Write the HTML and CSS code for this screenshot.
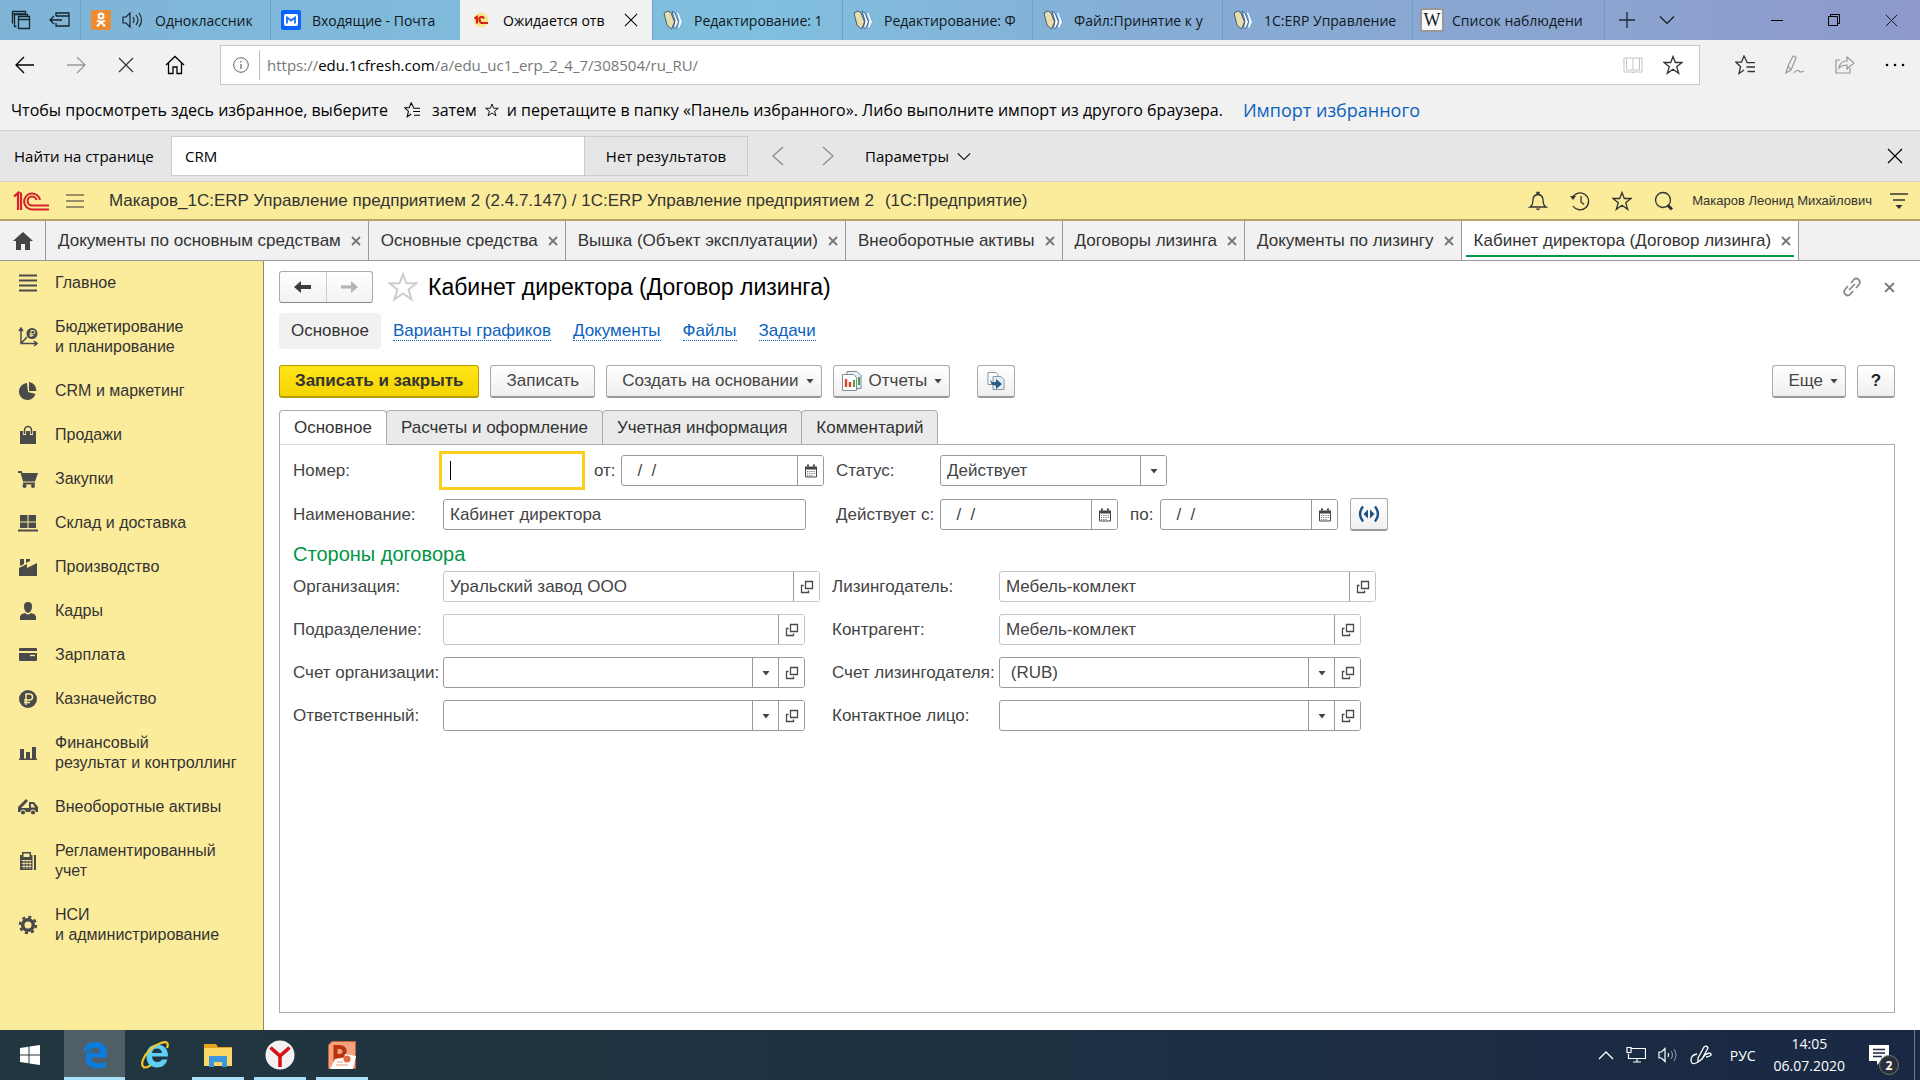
FILE: index.html
```html
<!DOCTYPE html>
<html lang="ru">
<head>
<meta charset="utf-8">
<title>Кабинет директора (Договор лизинга)</title>
<link rel="stylesheet" href="styles.css">
</head>
<body>
<svg class="defs" aria-hidden="true">
  <symbol id="i-open" viewBox="0 0 14 14"><path d="M5.5 1.5h7v7h-7zM3.5 5.5h-2v7h7v-2" fill="none" stroke="#4a4a4a" stroke-width="1.3"/></symbol>
  <symbol id="i-cal" viewBox="0 0 14 14"><path d="M1 2.5h12v10a1 1 0 0 1-1 1H2a1 1 0 0 1-1-1z" fill="#444"/><path d="M3 .5h2v2H3zM9 .5h2v2H9z" fill="#444"/><path d="M2 5.5h10v7H2z" fill="#fff"/><path d="M3 7.5h8M3 9.5h8M3 11.5h6" stroke="#777" stroke-dasharray="1.2 1" fill="none"/></symbol>
  <symbol id="i-arrow" viewBox="0 0 8 8"><path d="M.5 2h7L4 6.500z" fill="#444"/></symbol>
  <symbol id="i-x" viewBox="0 0 16 16"><path d="M1 1l14 14M15 1L1 15" fill="none" stroke="currentColor" stroke-width="1.2"/></symbol>
  <symbol id="i-xs" viewBox="0 0 10 10"><path d="M1 1l8 8M9 1L1 9" fill="none" stroke="#777" stroke-width="1.8"/></symbol>
  <symbol id="i-star" viewBox="0 0 20 20"><path d="M10 1.500l2.300 6H19l-5.300 4.200 2 6.600L10 14.300l-5.700 4 2-6.600L1 7.500h6.700z" fill="none" stroke="currentColor" stroke-width="1.300"/></symbol>
  <symbol id="i-fav" viewBox="0 0 20 20"><path d="M12 7L9 1 6.500 7.200H1l4.500 4.300-1.500 7 5-3.500M11.500 7.700H20M11.500 12H20M12.500 16.500H20" fill="none" stroke="currentColor" stroke-width="1.300"/></symbol>
  <symbol id="i-down" viewBox="0 0 16 10"><path d="M1 1.500l7 7 7-7" fill="none" stroke="currentColor" stroke-width="1.200"/></symbol>
  <symbol id="i-docs" viewBox="0 0 20 20"><path d="M13 1l3 2 3.500 9-3 6.500-2-1L16 11z" fill="#f4f8fc" stroke="#5c9ad6" stroke-width=".7"/><path d="M9 1l3 2 3.500 9-3 6.500-2-1L12 11z" fill="#fff" stroke="#2f5c8c" stroke-width=".9"/><path d="M1 3l4-2 3 2 3.500 9L8.500 19 4 15z" fill="#e9dfae" stroke="#2c4258" stroke-width=".8"/></symbol>
</svg>
<div class="screen">
  <header class="tabstrip">
    <div class="strip-tools">
      <svg width="20" height="20" viewBox="0 0 20 20"><path d="M1.500 13.500v-12h13v3M1.500 4h13M5.500 16.500h-2v-12h13v2M7.500 6.500h11v12h-11zM7.500 9.500h11" fill="none" stroke="#15252e" stroke-width="1.300"/></svg>
      <svg width="22" height="18" viewBox="0 0 22 18"><path d="M7 5V2h13v13H7v-3M7 5h13M1 9h12M5 5L1 9l4 4" fill="none" stroke="#15252e" stroke-width="1.300"/></svg>
    </div>
    <div class="btab">
      <svg width="20" height="20" viewBox="0 0 20 20"><rect width="20" height="20" rx="2" fill="#ee8a2f"/><circle cx="10" cy="6" r="2.500" fill="none" stroke="#fff" stroke-width="2"/><path d="M6 10.500q4 2.500 8 0M10 12l-4 4.500M10 12l4 4.500" fill="none" stroke="#fff" stroke-width="2"/></svg>
      <svg width="22" height="18" viewBox="0 0 22 18"><path d="M1 6h3l4-4v14l-4-4H1zM11 6q2 3 0 6M14 4q4 5 0 10M17 2q5 7 0 14" fill="none" stroke="#223" stroke-width="1.200"/></svg>
      <span class="btab-text">Одноклассник</span>
    </div>
    <div class="btab">
      <svg width="20" height="20" viewBox="0 0 20 20"><rect width="20" height="20" rx="2" fill="#0a62ff"/><rect x="3" y="4" width="14" height="12" rx="2" fill="#fff"/><path d="M6 13.500V7.500l4 3 4-3v6" fill="none" stroke="#1a6dff" stroke-width="1.800"/></svg>
      <span class="btab-text">Входящие - Почта</span>
    </div>
    <div class="btab active">
      <svg width="20" height="20" viewBox="0 0 20 20"><circle cx="9" cy="10" r="7.500" fill="#fbe58a"/><path d="M2.500 8.500L5 7v6.500" fill="none" stroke="#d8201c" stroke-width="2.200"/><path d="M12 8.500q-1-2-3-1.500T7.500 10t2 3H16" fill="none" stroke="#d8201c" stroke-width="2.200"/></svg>
      <span class="btab-text">Ожидается отв</span>
      <svg class="tab-x" width="14" height="14"><use href="#i-x"/></svg>
    </div>
    <div class="btab"><svg width="20" height="20"><use href="#i-docs"/></svg><span class="btab-text">Редактирование: 1</span></div>
    <div class="btab"><svg width="20" height="20"><use href="#i-docs"/></svg><span class="btab-text">Редактирование: Ф</span></div>
    <div class="btab"><svg width="20" height="20"><use href="#i-docs"/></svg><span class="btab-text">Файл:Принятие к у</span></div>
    <div class="btab"><svg width="20" height="20"><use href="#i-docs"/></svg><span class="btab-text">1С:ERP Управление</span></div>
    <div class="btab wide"><span class="wiki">W</span><span class="btab-text">Список наблюдени</span></div>
    <div class="strip-new">
      <svg width="16" height="16" viewBox="0 0 16 16"><path d="M8 0v16M0 8h16" stroke="#1b2836" stroke-width="1.300"/></svg>
      <svg width="16" height="10"><use href="#i-down"/></svg>
    </div>
    <div class="winctl">
      <svg width="12" height="12" viewBox="0 0 12 12"><path d="M0 6.500h12" stroke="#000"/></svg>
      <svg width="12" height="12" viewBox="0 0 12 12"><path d="M.5 2.500h9v9h-9zM2.500 2.500v-2h9v9h-2" fill="none" stroke="#000"/></svg>
      <svg width="13" height="13"><use href="#i-x"/></svg>
    </div>
  </header>

  <div class="addrbar">
    <div class="nav-icons">
      <svg width="20" height="18" viewBox="0 0 20 18"><path d="M19 9H1M9 1L1 9l8 8" fill="none" stroke="#000" stroke-width="1.300"/></svg>
      <svg width="20" height="18" viewBox="0 0 20 18"><path d="M1 9h18M11 1l8 8-8 8" fill="none" stroke="#999" stroke-width="1.300"/></svg>
      <svg width="16" height="16"><use href="#i-x"/></svg>
      <svg width="20" height="20" viewBox="0 0 20 20"><path d="M1 10l9-8.500 9 8.500M3.500 8v10.500h4.500V12h4v6.500h4.500V8" fill="none" stroke="#000" stroke-width="1.300"/></svg>
    </div>
    <div class="address">
      <svg width="16" height="16" viewBox="0 0 16 16"><circle cx="8" cy="8" r="7.300" fill="none" stroke="#666"/><path d="M8 7v5M8 4v1.500" stroke="#666" stroke-width="1.200"/></svg>
      <div class="url"><span>https://</span><b>edu.1cfresh.com</b><span>/a/edu_uc1_erp_2_4_7/308504/ru_RU/</span></div>
      <svg width="20" height="18" viewBox="0 0 20 18"><path d="M1 2h8l1 1 1-1h8v14h-8l-1 1-1-1H1zM10 3v13M3.500 2v12H9M16.500 2v12H11" fill="none" stroke="#c4c4c4"/></svg>
      <svg width="20" height="20"><use href="#i-star"/></svg>
    </div>
    <div class="addr-tools">
      <svg width="20" height="20"><use href="#i-fav"/></svg>
      <svg width="20" height="20" viewBox="0 0 20 20"><path d="M1 18L3 11 8 1q3 0 3 2L6 15zM3 11l3 4M9 18q3-4 5-2t5 0" fill="none" stroke="#999" stroke-width="1.200"/></svg>
      <svg width="20" height="20" viewBox="0 0 20 20"><path d="M5 5H1v13h14v-5M4 13q1-7 8-7V2l7 6-7 6v-4q-5 0-8 3z" fill="none" stroke="#999" stroke-width="1.200"/></svg>
      <svg width="20" height="4" viewBox="0 0 20 4"><circle cx="2" cy="2" r="1.300"/><circle cx="10" cy="2" r="1.300"/><circle cx="18" cy="2" r="1.300"/></svg>
    </div>
  </div>

  <div class="favbar">
    <span>Чтобы просмотреть здесь избранное, выберите</span>
    <svg class="fav-ico" width="16" height="16"><use href="#i-fav"/></svg>
    <span>затем</span>
    <svg width="14" height="14"><use href="#i-star"/></svg>
    <span>и перетащите в папку «Панель избранного». Либо выполните импорт из другого браузера.</span>
    <a href="#">Импорт избранного</a>
  </div>

  <div class="findbar">
    <label for="find">Найти на странице</label>
    <input id="find" type="text" value="CRM">
    <div class="find-result">Нет результатов</div>
    <div class="find-nav">
      <svg width="12" height="20" viewBox="0 0 12 20"><path d="M11 1L1 10l10 9" fill="none" stroke="#888" stroke-width="1.200"/></svg>
      <svg width="12" height="20" viewBox="0 0 12 20"><path d="M1 1l10 9-10 9" fill="none" stroke="#888" stroke-width="1.200"/></svg>
    </div>
    <button class="find-params" type="button">Параметры <svg width="14" height="9"><use href="#i-down"/></svg></button>
    <svg class="find-x" width="16" height="16"><use href="#i-x"/></svg>
  </div>

  <div class="apphead">
    <svg class="logo" width="36" height="20" viewBox="0 0 36 20"><g fill="none" stroke="#d8232a"><path d="M1 5.500L5 2v17M8 19V1.500" stroke-width="2.200"/><path d="M1 5.200L7 1.200" stroke-width="1.500"/><path d="M27 9a8 8 0 1 0-8 9.500h17" stroke-width="2"/><path d="M23.500 9a4.500 4.500 0 1 0-4.500 5.500h17" stroke-width="2"/></g></svg>
    <svg class="burger" width="18" height="14" viewBox="0 0 18 14"><path d="M0 1h18M0 7h18M0 13h18" stroke="#333" stroke-width="1.200"/></svg>
    <div class="apptitle"><span>Макаров_1С:ERP Управление предприятием 2 (2.4.7.147) / 1С:ERP Управление предприятием 2</span><span>(1С:Предприятие)</span></div>
    <div class="head-icons">
      <svg width="20" height="20" viewBox="0 0 20 20"><path d="M2 16q3-2 3-7 0-5 5-5.500Q15 4 15 9q0 5 3 7zM9 3.500V1.500h2v2" fill="none" stroke="#333" stroke-width="1.300"/><path d="M7.500 17.500h5l-2.500 2z" fill="#333"/></svg>
      <svg width="20" height="20" viewBox="0 0 20 20"><path d="M2.500 6.500A8.500 8.500 0 1 1 3 15M11 5v6l3 2.500" fill="none" stroke="#333" stroke-width="1.300"/><path d="M0 5h6l-3 4z" fill="#333"/></svg>
      <svg width="20" height="20"><use href="#i-star"/></svg>
      <svg width="20" height="20" viewBox="0 0 20 20"><circle cx="9" cy="9" r="7.500" fill="none" stroke="#333" stroke-width="1.300"/><path d="M13.500 14l4.500 4.500" stroke="#333" stroke-width="3"/></svg>
    </div>
    <span class="user">Макаров Леонид Михайлович</span>
    <svg width="18" height="18" viewBox="0 0 18 18"><path d="M0 2h18M3 8h12" stroke="#333" stroke-width="1.300"/><path d="M5.500 13h7L9 17z" fill="#333"/></svg>
  </div>

  <nav class="apptabs">
    <a class="home" href="#" aria-label="Начальная страница"><svg width="20" height="18" viewBox="0 0 20 18"><path d="M10 0L0 9h3v9h5v-6h4v6h5V9h3z" fill="#444"/></svg></a>
    <a class="atab" href="#">Документы по основным средствам<svg width="10" height="10"><use href="#i-xs"/></svg></a>
    <a class="atab" href="#">Основные средства<svg width="10" height="10"><use href="#i-xs"/></svg></a>
    <a class="atab" href="#">Вышка (Объект эксплуатации)<svg width="10" height="10"><use href="#i-xs"/></svg></a>
    <a class="atab" href="#">Внеоборотные активы<svg width="10" height="10"><use href="#i-xs"/></svg></a>
    <a class="atab" href="#">Договоры лизинга<svg width="10" height="10"><use href="#i-xs"/></svg></a>
    <a class="atab" href="#">Документы по лизингу<svg width="10" height="10"><use href="#i-xs"/></svg></a>
    <a class="atab current" href="#">Кабинет директора (Договор лизинга)<svg width="10" height="10"><use href="#i-xs"/></svg></a>
  </nav>

  <div class="body">
    <nav class="side">
      <a href="#"><svg width="20" height="20" viewBox="0 0 20 20"><path d="M1 2.500h18M1 7.500h18M1 12.500h18M1 17.500h18" stroke="#4a4a4a" stroke-width="2.200"/></svg><span>Главное</span></a>
      <a href="#"><svg width="20" height="20" viewBox="0 0 20 20"><g fill="none" stroke="#4a4a4a" stroke-width="1.500"><path d="M3 2v14.500h15M3 16.500L9 10M1 4l2-3 2 3M16 14l3 2.500-3 2.500"/></g><circle cx="14" cy="6.500" r="5.500" fill="#4a4a4a"/><path d="M13 10V3.500h2q2 0 2 1.700T15 7h-3.500M11.500 8.700h4" fill="none" stroke="#fbec9c"/></svg><span>Бюджетирование<br>и планирование</span></a>
      <a href="#"><svg width="20" height="20" viewBox="0 0 20 20"><path d="M9 2a8.500 8.500 0 1 0 8.500 11L10 11z" fill="#4a4a4a"/><path d="M11 1q7 1 7.500 9H11z" fill="#4a4a4a"/></svg><span>CRM и маркетинг</span></a>
      <a href="#"><svg width="20" height="20" viewBox="0 0 20 20"><path d="M2 6h16v13H2z" fill="#4a4a4a"/><path d="M6.500 10V5a3.500 3.500 0 0 1 7 0v5" fill="none" stroke="#fbec9c" stroke-width="3.200"/><path d="M6.500 9V5a3.500 3.500 0 0 1 7 0v4" fill="none" stroke="#4a4a4a" stroke-width="1.600"/></svg><span>Продажи</span></a>
      <a href="#"><svg width="20" height="20" viewBox="0 0 20 20"><path d="M0 2h3.500l1 2H20l-3 8.500H5L2.500 4H0zM5 13.500h12v2H5z" fill="#4a4a4a"/><circle cx="6.500" cy="17" r="2" fill="#4a4a4a"/><circle cx="15" cy="17" r="2" fill="#4a4a4a"/></svg><span>Закупки</span></a>
      <a href="#"><svg width="20" height="20" viewBox="0 0 20 20"><path d="M2 2h7.500v6.500H2zM10.500 2H18v6.500h-7.500zM2 9.500h7.500V15H2zM10.500 9.500H18V15h-7.500zM0 16.500h20v2H0z" fill="#4a4a4a"/></svg><span>Склад и доставка</span></a>
      <a href="#"><svg width="20" height="20" viewBox="0 0 20 20"><path d="M1 19v-8l8-4v4l10-5v13z" fill="#4a4a4a"/><path d="M2 2h4v5L2 9zM8 2h4v2L8 6z" fill="#4a4a4a"/></svg><span>Производство</span></a>
      <a href="#"><svg width="20" height="20" viewBox="0 0 20 20"><path d="M6 5q0-4 4-4t4 4q0 6-4 7-4-1-4-7zM2 19v-3q0-3 5-4 3 3 6 0 5 1 5 4v3z" fill="#4a4a4a"/></svg><span>Кадры</span></a>
      <a href="#"><svg width="20" height="20" viewBox="0 0 20 20"><path d="M1 4q0-1 1-1h16q1 0 1 1v2H1zM1 8h18v7q0 1-1 1H2q-1 0-1-1z" fill="#4a4a4a"/><path d="M12 10.500h5" stroke="#fbec9c" stroke-width="1.300"/></svg><span>Зарплата</span></a>
      <a href="#"><svg width="20" height="20" viewBox="0 0 20 20"><circle cx="10" cy="10" r="9" fill="#4a4a4a"/><path d="M8 16V5h3.500q3 0 3 3t-3 3H6M6 13.500h6" fill="none" stroke="#fbec9c" stroke-width="1.500"/></svg><span>Казначейство</span></a>
      <a href="#"><svg width="20" height="20" viewBox="0 0 20 20"><path d="M2 6h4v10H2zM8 9h4v7H8zM14 4h4v12h-4zM1 15.500h18V17H1z" fill="#4a4a4a"/></svg><span>Финансовый<br>результат и контроллинг</span></a>
      <a href="#"><svg width="20" height="20" viewBox="0 0 20 20"><path d="M0 10L8 2l2 2-7 7h8V5h5l4 5v5H0zM13 7v3.500h4L15 7z" fill="#4a4a4a" fill-rule="evenodd"/><circle cx="5" cy="15.500" r="2.500" fill="#4a4a4a" stroke="#fbec9c"/><circle cx="15" cy="15.500" r="2.500" fill="#4a4a4a" stroke="#fbec9c"/></svg><span>Внеоборотные активы</span></a>
      <a href="#"><svg width="20" height="20" viewBox="0 0 20 20"><path d="M4 1h9v3h1.500v15H2V4h2zM16 4h2v15h-2z" fill="#4a4a4a"/><path d="M5.500 2.500h6V6h-6z" fill="#fbec9c"/><path d="M3.500 9.500h10M3.500 12.500h10M3.500 15.500h10M6 9v9M9 9v9M12 9v9" stroke="#fbec9c" stroke-width=".8"/></svg><span>Регламентированный<br>учет</span></a>
      <a href="#"><svg width="20" height="20" viewBox="0 0 20 20"><circle cx="10" cy="10" r="5.300" fill="none" stroke="#4a4a4a" stroke-width="3.500"/><circle cx="10" cy="10" r="8" fill="none" stroke="#4a4a4a" stroke-width="2.400" stroke-dasharray="3.140 3.140"/></svg><span>НСИ<br>и администрирование</span></a>
    </nav>

    <main class="main">
      <div class="titlerow">
        <div class="backfwd">
          <button type="button" aria-label="Назад"><svg width="18" height="14" viewBox="0 0 18 14"><path d="M0 7l7-6v4h10v4H7v4z" fill="#3c3c3c"/></svg></button>
          <button type="button" aria-label="Вперед"><svg width="18" height="14" viewBox="0 0 18 14"><path d="M18 7l-7-6v4.500H1v3h10V13z" fill="#b4b4b4"/></svg></button>
        </div>
        <svg class="bigstar" width="30" height="30"><use href="#i-star"/></svg>
        <h1>Кабинет директора (Договор лизинга)</h1>
        <svg class="link" width="20" height="20" viewBox="0 0 20 20"><path d="M9 6l3-3.500q2-2 4.500 0t.5 5L14 11M11 14l-3 3.500q-2 2-4.500 0t-.5-5L6 9M7 13l6-6" fill="none" stroke="#888" stroke-width="1.700"/></svg>
        <svg width="11" height="11"><use href="#i-xs"/></svg>
      </div>

      <nav class="subnav">
        <span class="here">Основное</span>
        <a href="#">Варианты графиков</a><a href="#">Документы</a><a href="#">Файлы</a><a href="#">Задачи</a>
      </nav>

      <div class="cmdbar">
        <button class="btn primary" type="button">Записать и закрыть</button>
        <button class="btn" type="button">Записать</button>
        <button class="btn menu" type="button">Создать на основании<svg width="8" height="8"><use href="#i-arrow"/></svg></button>
        <button class="btn menu reports" type="button"><svg width="20" height="20" viewBox="0 0 20 20"><path d="M5 .5h10l4 4v13H5z" fill="#e9eff2" stroke="#7a8d98"/><path d="M.5 3.500h11l3 3v13H.5z" fill="#fff" stroke="#7a8d98"/><path d="M4 8v8" stroke="#e0442c" stroke-width="2.500"/><path d="M8 11v5" stroke="#e0442c" stroke-width="2.500"/><path d="M12 9v7M17 6v8" stroke="#4ba043" stroke-width="2"/></svg>Отчеты<svg width="8" height="8"><use href="#i-arrow"/></svg></button>
        <button class="btn square copy" type="button" aria-label="Перейти"><svg width="18" height="18" viewBox="0 0 18 18"><path d="M1 .5h8l2 2v10H1z" fill="#fff" stroke="#8797a3"/><path d="M6 4.500h8l3 3v10H6z" fill="#e6edf2" stroke="#8797a3"/><path d="M3 6q0 5 6 4V7l6 5-6 5v-3.500Q3 14 3 6z" fill="#245a86"/></svg></button>
        <button class="btn menu more" type="button">Еще<svg width="8" height="8"><use href="#i-arrow"/></svg></button>
        <button class="btn square help" type="button">?</button>
      </div>

      <div class="ftabs">
        <button class="on" type="button">Основное</button><button type="button">Расчеты и оформление</button><button type="button">Учетная информация</button><button type="button">Комментарий</button>
      </div>

      <form class="panel">
        <div class="top">
          <label for="num">Номер:</label>
          <div class="cell">
            <div class="focus"><i class="caret"></i><input id="num" type="text"></div>
            <label class="of" for="date">от:</label>
            <div class="field w203"><input id="date" type="text" value="  /  /"><button type="button" aria-label="Календарь"><svg width="14" height="14"><use href="#i-cal"/></svg></button></div>
          </div>
          <label for="status">Статус:</label>
          <div class="cell">
            <div class="field w227"><select id="status"><option>Действует</option></select><span class="drop"><svg width="8" height="8"><use href="#i-arrow"/></svg></span></div>
          </div>

          <label for="name">Наименование:</label>
          <div class="cell"><div class="field w363"><input id="name" type="text" value="Кабинет директора"></div></div>
          <label for="from">Действует с:</label>
          <div class="cell">
            <div class="field w178"><input id="from" type="text" value="  /  /"><button type="button" aria-label="Календарь"><svg width="14" height="14"><use href="#i-cal"/></svg></button></div>
            <label class="to" for="till">по:</label>
            <div class="field w178"><input id="till" type="text" value="  /  /"><button type="button" aria-label="Календарь"><svg width="14" height="14"><use href="#i-cal"/></svg></button></div>
            <button class="btn square period" type="button" aria-label="Период"><svg width="22" height="18" viewBox="0 0 22 18"><path d="M5 1.500Q-1 9 5 16.500M17 1.500q6 7.500 0 15" fill="none" stroke="#1d5280" stroke-width="2.400"/><path d="M10 4.500v9L5.500 9zM12 4.500v9L16.500 9z" fill="#1d5280"/></svg></button>
          </div>
        </div>

        <h2>Стороны договора</h2>

        <div class="sides">
          <label for="org">Организация:</label>
          <div class="field pale w377"><input id="org" type="text" value="Уральский завод ООО"><button type="button" aria-label="Открыть"><svg width="14" height="14"><use href="#i-open"/></svg></button></div>
          <label for="lessor">Лизингодатель:</label>
          <div class="field pale w377"><input id="lessor" type="text" value="Мебель-комлект"><button type="button" aria-label="Открыть"><svg width="14" height="14"><use href="#i-open"/></svg></button></div>

          <label for="dep">Подразделение:</label>
          <div class="field pale"><input id="dep" type="text"><button type="button" aria-label="Открыть"><svg width="14" height="14"><use href="#i-open"/></svg></button></div>
          <label for="contr">Контрагент:</label>
          <div class="field pale"><input id="contr" type="text" value="Мебель-комлект"><button type="button" aria-label="Открыть"><svg width="14" height="14"><use href="#i-open"/></svg></button></div>

          <label for="acc">Счет организации:</label>
          <div class="field"><input id="acc" type="text"><button type="button" aria-label="Выбрать"><svg width="8" height="8"><use href="#i-arrow"/></svg></button><button type="button" aria-label="Открыть"><svg width="14" height="14"><use href="#i-open"/></svg></button></div>
          <label for="lacc">Счет лизингодателя:</label>
          <div class="field"><input id="lacc" type="text" value=" (RUB)"><button type="button" aria-label="Выбрать"><svg width="8" height="8"><use href="#i-arrow"/></svg></button><button type="button" aria-label="Открыть"><svg width="14" height="14"><use href="#i-open"/></svg></button></div>

          <label for="resp">Ответственный:</label>
          <div class="field"><input id="resp" type="text"><button type="button" aria-label="Выбрать"><svg width="8" height="8"><use href="#i-arrow"/></svg></button><button type="button" aria-label="Открыть"><svg width="14" height="14"><use href="#i-open"/></svg></button></div>
          <label for="cont">Контактное лицо:</label>
          <div class="field"><input id="cont" type="text"><button type="button" aria-label="Выбрать"><svg width="8" height="8"><use href="#i-arrow"/></svg></button><button type="button" aria-label="Открыть"><svg width="14" height="14"><use href="#i-open"/></svg></button></div>
        </div>
      </form>
    </main>
  </div>

  <footer class="taskbar">
    <div class="task start"><svg width="20" height="20" viewBox="0 0 20 20"><path d="M0 3l8.500-1.200V9.500H0zM9.500 1.600L20 0v9.500H9.500zM0 10.500h8.500v7.800L0 17zM9.500 10.500H20V20L9.500 18.400z" fill="#fff"/></svg></div>
    <div class="task edge"><svg width="26" height="28" viewBox="0 0 26 28"><path d="M1 13Q2 1 13.500 1 25 1 25 13v3.500H9q.5 6 8 6 4 0 7-2v5q-3 2-8.500 2Q4 27.500 3.500 17 4 10 10 7.500 3.500 8 1 13zm8-1h9q0-5-4.500-5T9 12z" fill="#0b7bdc" fill-rule="evenodd"/></svg></div>
    <div class="task"><svg width="30" height="30" viewBox="0 0 30 30"><path d="M27 16.500H11q.5 5.500 5.500 5.500 3 0 4.500-2.500h5.500Q24 27.500 16 27.500 5.500 27 5.500 16T16 4.500Q27 5 27 16.500zM11 13h10q-.5-4.500-5-4.500T11 13z" fill="#5fd0f5" fill-rule="evenodd"/><path d="M26 8q3-8-6-5Q11 6 4.500 15-1 24 2.500 27q2 1.500 7-1.500" fill="none" stroke="#f4c927" stroke-width="2.200"/></svg></div>
    <div class="task run"><svg width="28" height="24" viewBox="0 0 28 24"><path d="M0 1h12l2 3h14v19H0z" fill="#e5a21b"/><path d="M0 5h28v18H0z" fill="#fcd667"/><path d="M5 24V13h18v11h-5v-5h-8v5z" fill="#3d96dd"/></svg></div>
    <div class="task run"><svg width="30" height="30" viewBox="0 0 30 30"><circle cx="15" cy="15" r="14.500" fill="#f2f2f2"/><path d="M5.500 7.500L15 16l9.500-8.500M15 15v12" fill="none" stroke="#d8121a" stroke-width="3.600"/></svg></div>
    <div class="task run"><svg width="28" height="28" viewBox="0 0 28 28"><path d="M4 .5h23.500v27H.5V4z" fill="#f2a27c" stroke="#c8603c"/><path d="M7.500 21V6h4q5 0 5 4.500T11.500 15H8" fill="none" stroke="#b93310" stroke-width="4"/><path d="M7 18l9-1 1-4 11 2-3 13H2z" fill="#fff"/><circle cx="19" cy="18" r="3.500" fill="#e06a3c"/><path d="M9 21h6M8 24h12" stroke="#e79a7a"/></svg></div>
    <div class="tray">
      <svg width="16" height="10" viewBox="0 0 16 10"><path d="M1 9l7-7 7 7" fill="none" stroke="#fff" stroke-width="1.300"/></svg>
      <svg width="20" height="18" viewBox="0 0 20 18"><path d="M5 2.500h14.500v10H2.500v-5M1 1.500h4v5H1zM11 12.500v3M7 16h8" fill="none" stroke="#fff" stroke-width="1.200"/></svg>
      <svg width="20" height="16" viewBox="0 0 20 16"><path d="M1 5h2.500L7 1.500v13L3.500 11H1zM10 6q1.500 2 0 4" fill="none" stroke="#fff" stroke-width="1.200"/><path d="M13 4q3 4 0 8M16 2q4 6 0 12" fill="none" stroke="#7f8a9c" stroke-width="1.200"/></svg>
      <svg width="22" height="20" viewBox="0 0 22 20"><path d="M8 13L14 2q3-2 4 1l-6 11-4 3zM7 9q-6 1-6 6t5 3q6-3 9-8 5-3 6-1t-5 3" fill="none" stroke="#fff" stroke-width="1.300"/></svg>
      <span class="lang">РУС</span>
      <div class="clock"><span>14:05</span><span>06.07.2020</span></div>
      <div class="notify">
        <svg width="20" height="20" viewBox="0 0 20 20"><path d="M0 0h20v16h-8l-4 4v-4H0z" fill="#fff"/><path d="M4 4.500h12M4 8h12M4 11.500h9" stroke="#1b2a42" stroke-width="1.300"/></svg>
        <span class="badge">2</span>
      </div>
    </div>
    <div class="peek"></div>
  </footer>
</div>
</body>
</html>
```

FILE: styles.css
```css
* { box-sizing: border-box; }
body { margin: 0; font-family: "Liberation Sans", Arial, sans-serif; font-size: 16px; color: #333; background: #fff; }
svg { flex: none; display: block; }
a { color: inherit; text-decoration: none; }
button, input, select { font: inherit; color: inherit; margin: 0; }
button { cursor: pointer; }
.defs { position: absolute; width: 0; height: 0; }
.screen { display: flex; flex-direction: column; min-height: 100vh; }

/* Browser chrome */
.tabstrip, .favbar, .findbar, .url, .taskbar { font-family: "Open Sans", "Noto Sans", sans-serif; }
.tabstrip { display: flex; height: 40px; font-size: 14px; color: #10181f; background: linear-gradient(90deg, #7fb4d6 0, #80bfde 40%, #86add5 60%, #8ba3cf 85%, #8d98cb 100%); }
.strip-tools { display: flex; align-items: center; gap: 18px; width: 80px; padding-left: 11px; }
.btab { display: flex; align-items: center; flex: 0 1 190px; min-width: 0; gap: 11px; padding: 0 12px 0 10px; border-left: 1px solid #6f9fc2; overflow: hidden; }
.btab.wide { flex-basis: 192px; }
.btab-text { flex: 1; min-width: 0; overflow: hidden; white-space: nowrap; }
.btab.active { flex-basis: 192px; background: #f1f1f1; color: #000; border: 0; padding-left: 12px; }
.tab-x { margin-right: 2px; }
.wiki { display: grid; place-items: center; width: 24px; height: 24px; border: 2px solid #999; border-radius: 3px; background: #f8f8f8; font: 18px/20px "Liberation Serif", serif; flex: none; margin: 0 -3px 0 -3px; }
.strip-new { display: flex; align-items: center; gap: 24px; padding-left: 14px; border-left: 1px solid #7c93bd; }
.winctl { display: flex; align-items: center; gap: 45px; margin-left: auto; padding-right: 22px; }

.addrbar { display: flex; align-items: center; height: 50px; background: #f1f1f1; }
.nav-icons { display: flex; align-items: center; justify-content: space-between; width: 220px; padding: 0 35px 0 15px; }
.address { display: flex; align-items: center; flex: 1; gap: 20px; height: 40px; padding: 0 16px 0 12px; background: #fff; border: 1px solid #c8c8c8; }
.url { display: flex; align-items: center; flex: 1; height: 30px; margin-left: -10px; padding-left: 7px; border-left: 1px solid #bbb; color: #777; font-size: 15px; }
.url b { color: #000; font-weight: 400; }
.addr-tools { display: flex; align-items: center; justify-content: space-between; width: 220px; padding: 0 15px 0 35px; }

.favbar { display: flex; align-items: center; gap: 8px; height: 40px; padding-left: 11px; background: #f1f1f1; color: #000; font-size: 16px; white-space: nowrap; }
.fav-ico { margin: 0 4px 0 8px; }
.favbar a { margin-left: 12px; color: #0a62bf; font-size: 18px; }

.findbar { display: flex; align-items: center; height: 52px; padding-right: 17px; background: #e6e6e6; border-top: 1px solid #ccc; border-bottom: 1px solid #ccc; color: #000; font-size: 15px; white-space: nowrap; }
.findbar label { width: 171px; padding-left: 14px; }
.findbar input { width: 414px; height: 40px; padding: 0 13px; border: 1px solid #ccc; border-radius: 0; background: #fff; outline: 0; }
.find-result { width: 163px; height: 40px; border: 1px solid #ccc; border-left: 0; line-height: 38px; text-align: center; }
.find-nav { display: flex; gap: 38px; padding: 0 31px 0 24px; }
.find-params { display: flex; align-items: center; gap: 8px; padding: 0; border: 0; background: none; }
.find-x { margin-left: auto; }

/* Application header */
.apphead { display: flex; align-items: center; height: 39px; padding: 0 12px 0 13px; background: #fbec9c; border-bottom: 2px solid #b5a76a; color: #333; font-size: 17px; }
.burger { margin-left: 17px; }
.apptitle { display: flex; gap: 11px; margin-left: 25px; white-space: nowrap; }
.head-icons { display: flex; gap: 22px; margin-left: auto; }
.user { margin: 0 18px; font-size: 13px; white-space: nowrap; }

.apptabs { display: flex; height: 40px; background: #f1f1f1; border-bottom: 1px solid #999; font-size: 17px; }
.home { display: flex; align-items: center; width: 46px; padding-left: 13px; border-right: 1px solid #999; }
.atab { display: flex; align-items: center; gap: 10px; padding: 0 7px 0 12px; border-right: 1px solid #999; white-space: nowrap; }
.atab.current { background: linear-gradient(#009646, #009646) center bottom 3px / calc(100% - 8px) 2px no-repeat #fff; }

.body { display: flex; flex: 1; }
.side { width: 264px; background: #fbec9c; border-right: 1px solid #8f8a60; line-height: 20px; }
.side a { display: flex; align-items: center; gap: 17px; padding: 12px 0 12px 18px; }

/* Document form */
.main { display: flex; flex-direction: column; flex: 1; min-width: 0; padding: 10px 25px 17px 15px; }
.titlerow { display: flex; align-items: center; height: 32px; }
.backfwd { display: flex; width: 94px; height: 32px; border: 1px solid #aaa; border-bottom-color: #888; border-radius: 3px; background: linear-gradient(#fff, #f2f2f2); }
.backfwd button { display: grid; place-items: center; flex: 1; padding: 0; border: 0; background: none; }
.backfwd button + button { border-left: 1px solid #ccc; }
.bigstar { margin: 0 10px 0 15px; color: #c9cdd2; }
h1 { margin: 0; color: #000; font-size: 23px; font-weight: 400; line-height: 30px; }
.link { margin: 0 22px 0 auto; }

.subnav { display: flex; align-items: center; gap: 22px; height: 36px; margin-top: 10px; font-size: 17px; }
.here { padding: 0 12px; margin-right: -10px; border-radius: 4px; background: #f1f1f1; line-height: 36px; }
.subnav a { color: #0a62bf; border-bottom: 1px dotted #0a62bf; line-height: 18px; }

.cmdbar { display: flex; gap: 11px; margin-top: 16px; }
.btn { display: flex; align-items: center; justify-content: center; height: 33px; padding: 0 15px; border: 1px solid #aaa; border-bottom: 2px solid #999; border-radius: 3px; background: linear-gradient(#fff, #f0f0f0); color: #444; font-size: 17px; white-space: nowrap; }
.primary { border-color: #b39b00; background: linear-gradient(#ffe51a, #f5d400); color: #333; font-weight: 700; }
.menu { gap: 7px; padding-right: 7px; }
.reports { padding-left: 8px; }
.square { width: 38px; padding: 0; }
.copy { margin-left: 16px; }
.more { margin-left: auto; }
.help { color: #222; font-weight: 700; }

.ftabs { display: flex; margin-top: 12px; position: relative; }
.ftabs button { height: 35px; margin-right: -1px; margin-bottom: -1px; padding: 0 14px; border: 1px solid #aaa; border-radius: 4px 4px 0 0; background: #eaeaea; color: #333; font-size: 17px; }
.ftabs .on { border-bottom-color: #ddd; background: #fff; }
.panel { flex: 1; padding: 10px 13px; border: 1px solid #aaa; color: #444; font-size: 17px; }
.top, .sides { display: grid; align-items: center; grid-auto-rows: 31px; }
.top { grid-template-columns: 150px 393px 104px 1fr; row-gap: 13px; }
.sides { grid-template-columns: 150px 389px 167px 1fr; row-gap: 12px; }
.panel label { white-space: nowrap; }
.cell { display: flex; align-items: center; }
h2 { margin: 12px 0 5px; color: #009646; font-size: 20px; font-weight: 400; line-height: 24px; }

.field { display: flex; width: 362px; height: 31px; border: 1px solid #999; border-radius: 3px; background: #fff; overflow: hidden; }
.field input, .field select { flex: 1; min-width: 0; padding: 0 6px; border: 0; background: none; outline: 0; appearance: none; }
.field button, .drop { display: grid; place-items: center; width: 26px; padding: 0; border: 0; border-left: 1px solid #999; background: #fff; }
.pale { border-color: #c4c4c4; }
.w178 { width: 178px; }
.w203 { width: 203px; }
.w227 { width: 227px; }
.w363 { width: 363px; }
.w377 { width: 377px; }
.focus { display: flex; align-items: center; width: 146px; height: 39px; margin-left: -4px; padding-left: 8px; border: 3px solid #fbce1e; }
.focus input { flex: 1; min-width: 0; border: 0; outline: 0; }
.caret { width: 1px; height: 19px; background: #000; }
.of { width: 36px; padding-left: 9px; }
.to { width: 42px; padding-left: 12px; }
.period { margin-left: 12px; }

/* Desktop taskbar */
.taskbar { display: flex; height: 50px; background: linear-gradient(90deg, #223740, #1e3142 50%, #1a2844); color: #fff; font-size: 14px; }
.task { display: grid; place-items: center; width: 52px; margin: 0 5px; border-bottom: 3px solid transparent; border-top: 3px solid transparent; }
.start { width: 60px; margin: 0 4px 0 0; }
.edge { width: 61px; margin: 0; background: #4e5f67 padding-box; border-color: #4e5f67 transparent #a9e0fb; }
.run { border-bottom-color: #a9e0fb; }
.tray { display: flex; align-items: center; gap: 12px; margin-left: auto; padding-right: 25px; }
.lang { margin-left: 6px; }
.clock { display: flex; flex-direction: column; align-items: center; margin-left: 6px; line-height: 22px; }
.notify { position: relative; margin-left: 12px; }
.badge { position: absolute; left: 10px; top: 10px; display: grid; place-items: center; width: 20px; height: 20px; border: 1px solid #777; border-radius: 50%; background: #2b2f38; font-size: 12px; font-weight: 700; }
.peek { width: 6px; border-left: 1px solid #6f7a8c; }
```
